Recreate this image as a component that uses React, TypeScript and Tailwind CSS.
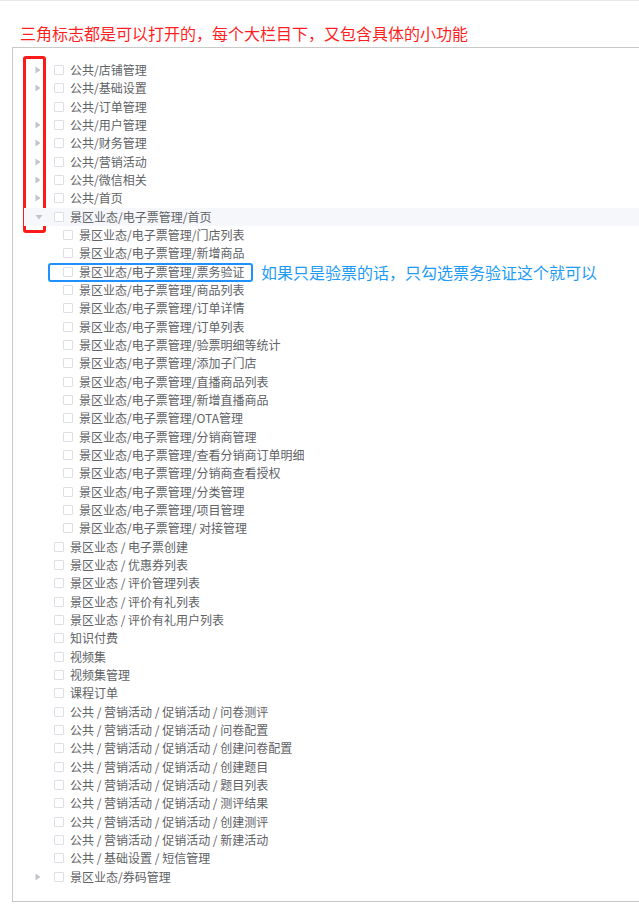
import React from "react";

type Node = { label: string; arrow?: "right" | "down"; child?: boolean; hl?: boolean; mark?: boolean };

const rows: Node[] = [
  { label: "公共/店铺管理", arrow: "right" },
  { label: "公共/基础设置", arrow: "right" },
  { label: "公共/订单管理" },
  { label: "公共/用户管理", arrow: "right" },
  { label: "公共/财务管理", arrow: "right" },
  { label: "公共/营销活动", arrow: "right" },
  { label: "公共/微信相关", arrow: "right" },
  { label: "公共/首页", arrow: "right" },
  { label: "景区业态/电子票管理/首页", arrow: "down", hl: true },
  { label: "景区业态/电子票管理/门店列表", child: true },
  { label: "景区业态/电子票管理/新增商品", child: true },
  { label: "景区业态/电子票管理/票务验证", child: true, mark: true },
  { label: "景区业态/电子票管理/商品列表", child: true },
  { label: "景区业态/电子票管理/订单详情", child: true },
  { label: "景区业态/电子票管理/订单列表", child: true },
  { label: "景区业态/电子票管理/验票明细等统计", child: true },
  { label: "景区业态/电子票管理/添加子门店", child: true },
  { label: "景区业态/电子票管理/直播商品列表", child: true },
  { label: "景区业态/电子票管理/新增直播商品", child: true },
  { label: "景区业态/电子票管理/OTA管理", child: true },
  { label: "景区业态/电子票管理/分销商管理", child: true },
  { label: "景区业态/电子票管理/查看分销商订单明细", child: true },
  { label: "景区业态/电子票管理/分销商查看授权", child: true },
  { label: "景区业态/电子票管理/分类管理", child: true },
  { label: "景区业态/电子票管理/项目管理", child: true },
  { label: "景区业态/电子票管理/ 对接管理", child: true },
  { label: "景区业态 / 电子票创建" },
  { label: "景区业态 / 优惠券列表" },
  { label: "景区业态 / 评价管理列表" },
  { label: "景区业态 / 评价有礼列表" },
  { label: "景区业态 / 评价有礼用户列表" },
  { label: "知识付费" },
  { label: "视频集" },
  { label: "视频集管理" },
  { label: "课程订单" },
  { label: "公共 / 营销活动 / 促销活动 / 问卷测评" },
  { label: "公共 / 营销活动 / 促销活动 / 问卷配置" },
  { label: "公共 / 营销活动 / 促销活动 / 创建问卷配置" },
  { label: "公共 / 营销活动 / 促销活动 / 创建题目" },
  { label: "公共 / 营销活动 / 促销活动 / 题目列表" },
  { label: "公共 / 营销活动 / 促销活动 / 测评结果" },
  { label: "公共 / 营销活动 / 促销活动 / 创建测评" },
  { label: "公共 / 营销活动 / 促销活动 / 新建活动" },
  { label: "公共 / 基础设置 / 短信管理" },
  { label: "景区业态/券码管理", arrow: "right" },
];

function Arrow({ dir }: { dir?: "right" | "down" }) {
  if (!dir) return <span className="w-[6px]" />;
  if (dir === "right")
    return (
      <svg width="6" height="8" viewBox="0 0 6 8" className="block">
        <path d="M0.5 0.5 L5.5 4 L0.5 7.5 Z" fill="#c0c4cc" />
      </svg>
    );
  return (
    <svg width="8" height="6" viewBox="0 0 8 6" className="block">
      <path d="M0.5 1 L7.5 1 L4 5.5 Z" fill="#c0c4cc" />
    </svg>
  );
}

function Row({ n }: { n: Node }) {
  return (
    <div className={`relative flex h-[18.34px] items-center ${n.hl ? "bg-[#f5f7fa]" : ""}`}>
      <div className="flex w-[30px] items-center justify-start pl-[11px]">
        {n.child ? null : <Arrow dir={n.arrow} />}
      </div>
      <div className={`flex items-center ${n.child ? "pl-[9px]" : ""}`}>
        <span className="box-border block h-[10px] w-[10px] rounded-[1px] border border-[#dcdfe6] bg-white" />
        <span className="ml-[6px] whitespace-pre text-[12px] leading-[16px] text-[#606266]">{n.label}</span>
      </div>
      {n.mark ? (
        <>
          <div className="absolute left-[24px] top-[0px] h-[19px] w-[205px] rounded-[3px] border-2 border-[#1e90ff]" />
          <span className="absolute left-[237px] top-[-3px] whitespace-nowrap text-[16px] leading-[24px] text-[#1e9bf5]">
            如果只是验票的话，只勾选票务验证这个就可以
          </span>
        </>
      ) : null}
    </div>
  );
}

export default function App() {
  return (
    <div
      className="min-h-[916px] w-[639px] overflow-hidden border-t border-[#e8e8e8] bg-white"
      style={{ fontFamily: '"Microsoft YaHei", "Noto Sans CJK SC", "Noto Sans", sans-serif' }}
    >
      <div className="pl-[20px] pt-[20px] text-[16px] leading-[24px] text-[#ff1f1f]">
        三角标志都是可以打开的，每个大栏目下，又包含具体的小功能
      </div>
      <div className="relative ml-[12px] mt-[2px] w-[700px] border-y border-l border-[#c8c8c8] pb-[15px] pl-[11px] pt-[13px]">
        <div className="absolute left-[10px] top-[8px] h-[177px] w-[23px] rounded-[3px] border-[3px] border-[#ff1a1a]" />
        {rows.map((n, i) => (
          <Row key={i} n={n} />
        ))}
      </div>
    </div>
  );
}
